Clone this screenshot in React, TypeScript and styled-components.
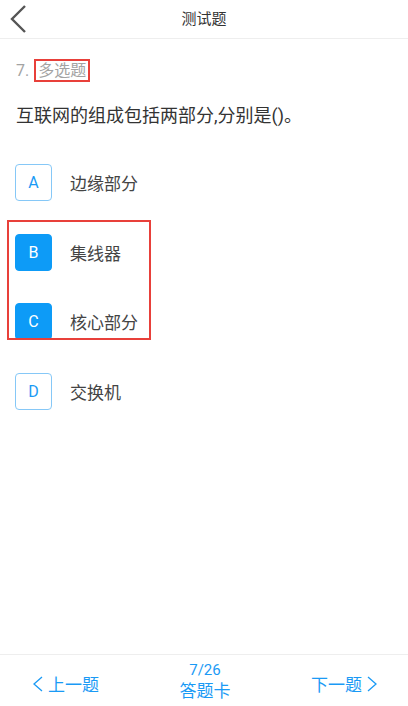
import React from "react";
import styled, { createGlobalStyle } from "styled-components";

const Global = createGlobalStyle`
  html, body { margin: 0; padding: 0; background: #fff; }
  body { font-family: Roboto, "Noto Sans CJK SC", "Noto Sans", sans-serif; }
  * { box-sizing: border-box; }
`;

const BLUE = "#1a9af5";

const Page = styled.div`
  width: 408px;
  height: 706px;
  display: flex;
  flex-direction: column;
  background: #fff;
  overflow: hidden;
`;

const Header = styled.header`
  position: relative;
  height: 39px;
  flex-shrink: 0;
  display: flex;
  align-items: center;
  justify-content: center;
  border-bottom: 1px solid #eeeeee;
`;

const BackButton = styled.button`
  position: absolute;
  left: 6px;
  top: 3px;
  width: 24px;
  height: 32px;
  padding: 0;
  border: none;
  background: none;
  display: flex;
  align-items: center;
  justify-content: center;
`;

const Title = styled.h1`
  margin: 0;
  font-size: 15px;
  font-weight: 400;
  color: #333;
  line-height: 1;
`;

const Content = styled.main`
  flex: 1;
  padding: 0 16px;
  display: flex;
  flex-direction: column;
`;

const TypeLine = styled.div`
  margin-top: 21px;
  font-size: 16px;
  line-height: 21px;
  color: #a3a3a3;
`;

const Mark = styled.span`
  border: 2px solid #e8403a;
  padding: 0 2px;
  margin-left: 1px;
`;

const Question = styled.p`
  margin: 22px 0 0;
  font-size: 18px;
  line-height: 26px;
  color: #333;
`;

const Options = styled.div`
  position: relative;
  margin-top: 35px;
  margin-left: -1px;
  display: flex;
  flex-direction: column;
  gap: 32.5px;
`;

const OptionRow = styled.div`
  display: flex;
  align-items: center;
  height: 37px;
  gap: 18px;
`;

const Letter = styled.span<{ $selected?: boolean }>`
  width: 37px;
  height: 37px;
  border-radius: 4px;
  display: flex;
  align-items: center;
  justify-content: center;
  font-family: Roboto, sans-serif;
  font-size: 16px;
  color: ${(p) => (p.$selected ? "#fff" : BLUE)};
  background: ${(p) => (p.$selected ? "#0d9bf7" : "#fff")};
  border: 1px solid ${(p) => (p.$selected ? "#0d9bf7" : "#86c8f7")};
`;

const Label = styled.span`
  font-size: 17px;
  color: #444;
`;

const Highlight = styled.div`
  position: absolute;
  left: -8px;
  top: 56px;
  width: 144px;
  height: 120px;
  border: 2px solid #e8403a;
  pointer-events: none;
`;

const Footer = styled.footer`
  height: 52px;
  flex-shrink: 0;
  border-top: 1px solid #eeeeee;
  display: grid;
  grid-template-columns: 1fr auto 1fr;
  align-items: center;
  padding: 0 31px 0 33px;
  color: ${BLUE};
`;

const NavButton = styled.button<{ $end?: boolean }>`
  justify-self: ${(p) => (p.$end ? "end" : "start")};
  display: flex;
  align-items: center;
  gap: 5px;
  padding: 0;
  margin-top: 6px;
  border: none;
  background: none;
  font-family: inherit;
  font-size: 17px;
  color: ${BLUE};
`;

const Center = styled.div`
  display: flex;
  flex-direction: column;
  align-items: center;
  padding-top: 2px;
`;

const Count = styled.span`
  font-size: 15px;
  line-height: 19px;
`;

const Card = styled.span`
  font-size: 17px;
  line-height: 22px;
`;

const Chevron = ({ dir }: { dir: "left" | "right" }) => (
  <svg width="10" height="16" viewBox="0 0 10 16">
    <polyline
      points={dir === "left" ? "9,1 1,8 9,15" : "1,1 9,8 1,15"}
      fill="none"
      stroke={BLUE}
      strokeWidth="1.3"
    />
  </svg>
);

const options = [
  { key: "A", text: "边缘部分", selected: false },
  { key: "B", text: "集线器", selected: true },
  { key: "C", text: "核心部分", selected: true },
  { key: "D", text: "交换机", selected: false },
];

export default function App() {
  return (
    <Page>
      <Global />
      <Header>
        <BackButton aria-label="返回">
          <svg width="18" height="30" viewBox="0 0 18 30">
            <polyline
              points="16,2 3,15 16,28"
              fill="none"
              stroke="#555"
              strokeWidth="2.4"
            />
          </svg>
        </BackButton>
        <Title>测试题</Title>
      </Header>
      <Content>
        <TypeLine>
          7. <Mark>多选题</Mark>
        </TypeLine>
        <Question>互联网的组成包括两部分,分别是()。</Question>
        <Options>
          {options.map((o) => (
            <OptionRow key={o.key}>
              <Letter $selected={o.selected}>{o.key}</Letter>
              <Label>{o.text}</Label>
            </OptionRow>
          ))}
          <Highlight />
        </Options>
      </Content>
      <Footer>
        <NavButton>
          <Chevron dir="left" />
          上一题
        </NavButton>
        <Center>
          <Count>7/26</Count>
          <Card>答题卡</Card>
        </Center>
        <NavButton $end>
          下一题
          <Chevron dir="right" />
        </NavButton>
      </Footer>
    </Page>
  );
}
